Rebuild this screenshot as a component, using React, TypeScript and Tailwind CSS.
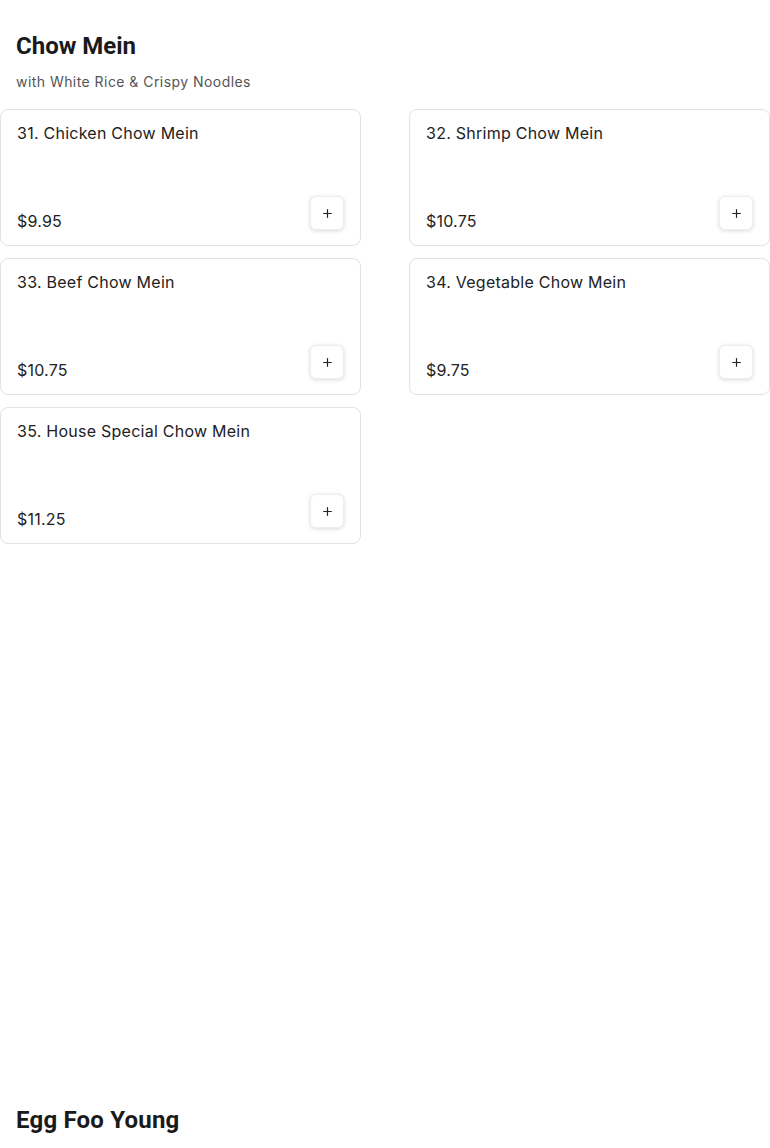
import { Plus } from "lucide-react";

type Item = { name: string; price: string };

const chowMein: Item[] = [
  { name: "31. Chicken Chow Mein", price: "$9.95" },
  { name: "32. Shrimp Chow Mein", price: "$10.75" },
  { name: "33. Beef Chow Mein", price: "$10.75" },
  { name: "34. Vegetable Chow Mein", price: "$9.75" },
  { name: "35. House Special Chow Mein", price: "$11.25" },
];

const body = { fontFamily: "Inter, 'Noto Sans', sans-serif" };
const heading = { fontFamily: "Roboto, 'Liberation Sans', sans-serif" };

const ItemCard = ({ item }: { item: Item }) => (
  <div className="h-[137px] flex flex-col justify-between rounded-lg border border-[#e2e2e2] bg-white px-4 pt-[11px] pb-[15px]">
    <div className="text-base leading-6 tracking-[0.25px] text-[#222]">{item.name}</div>
    <div className="flex items-end justify-between">
      <span className="mb-[-3px] text-base leading-6 tracking-[0.2px] text-[#222]">{item.price}</span>
      <button className="flex h-[34px] w-[34px] items-center justify-center rounded-md border border-[#eee] bg-white shadow-[0_1px_4px_rgba(0,0,0,0.15)]">
        <Plus size={13} strokeWidth={2.2} className="text-[#222]" />
      </button>
    </div>
  </div>
);

export default function App() {
  return (
    <div className="min-h-screen bg-white pt-[30px]" style={body}>
      <section className="h-[1074px]">
        <h2 className="px-4 text-2xl leading-8 font-bold text-[#1a1a1a]" style={heading}>
          Chow Mein
        </h2>
        <p className="mt-[10px] px-4 text-sm leading-5 tracking-[0.45px] text-[#555]">
          with White Rice &amp; Crispy Noodles
        </p>
        <div className="mt-[17px] grid grid-cols-2 gap-x-12 gap-y-3">
          {chowMein.map((item) => (
            <ItemCard key={item.name} item={item} />
          ))}
        </div>
      </section>
      <section>
        <h2 className="px-4 text-2xl leading-8 font-bold tracking-[0.2px] text-[#1a1a1a]" style={heading}>
          Egg Foo Young
        </h2>
      </section>
    </div>
  );
}
